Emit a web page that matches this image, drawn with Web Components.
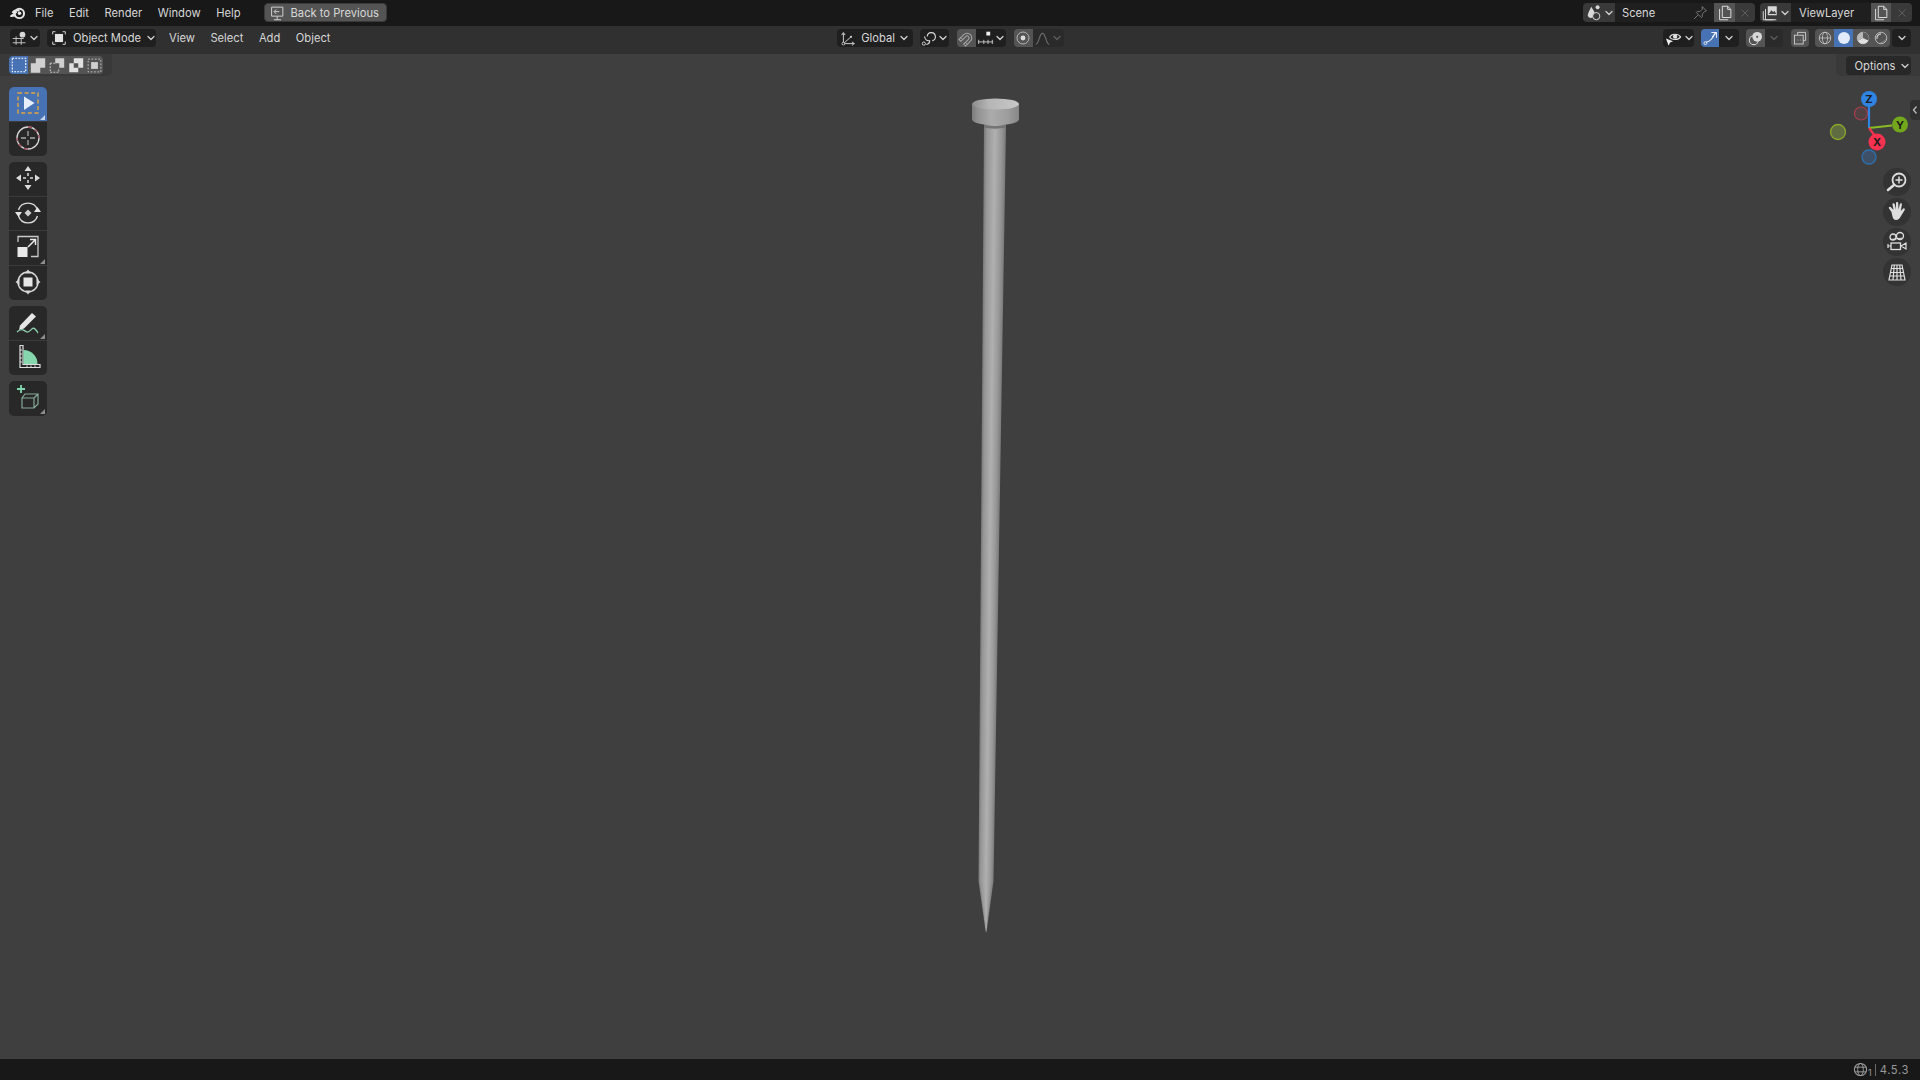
<!DOCTYPE html>
<html>
<head>
<meta charset="utf-8">
<title>Blender</title>
<style>
  html, body { margin: 0; height: 100%; background: #3f3f3f; overflow: hidden; }
  body { font: 11.2px Inter, "Liberation Sans", sans-serif; color: #d8d8d8; }
</style>
</head>
<body>
<blender-app></blender-app>
<script>
const chevron = `<path d="M-3-1.5 0 1.5 3-1.5" fill="none" stroke="currentColor" stroke-width="1.3" stroke-linecap="round" stroke-linejoin="round"/>`;

// all drawn in a 20x20 box
const icons = {
  logo: `<circle cx="11.5" cy="10.5" r="5.2" fill="none" stroke="#e6e6e6" stroke-width="2.2"/><circle cx="11.7" cy="10.3" r="2" fill="#e6e6e6"/><path d="M2 13.5 8 9.2 4 9.2 6 7.4 11 7.4 M2.5 13.5 7 13" fill="none" stroke="#e6e6e6" stroke-width="1.8" stroke-linejoin="round" stroke-linecap="round"/>`,
  back: `<path d="M4 3.5h12.5v10H4z" fill="none" stroke="#d0d0d0" stroke-width="1.1"/><path d="M6.5 17.5h8M10.2 13.5v4" stroke="#d0d0d0" stroke-width="1.1"/><path d="M12.5 8.5H7M9.2 6 6.7 8.5 9.2 11" fill="none" stroke="#d0d0d0" stroke-width="1.1"/>`,
  editor: `<circle cx="13.5" cy="5.5" r="3.4" fill="#d8d8d8"/><path d="M2 10h13M2 15h15M6 7.5v10M12 10v7.5" fill="none" stroke="#c8c8c8" stroke-width="1.1"/>`,
  objmode: `<rect x="5.5" y="5.5" width="9" height="9" fill="#e4e4e4"/><path d="M3 6V3h3M14 3h3v3M17 14v3h-3M6 17H3v-3" fill="none" stroke="#d0d0d0" stroke-width="1.1"/>`,
  selSet: `<rect x="2.5" y="2.5" width="15" height="15" fill="none" stroke="#fff" stroke-width="1.2" stroke-dasharray="2 1.4"/>`,
  selExtend: `<path d="M2 8H7.5V2.5h10.5V13H12.5V18.5H2z" fill="#d0d0d0"/>`,
  selSub: `<path d="M8 2.5h10V13H12.5V8H8z" fill="#d0d0d0"/><path d="M2.5 8H8M2.5 8v10h9.5V13.5" fill="none" stroke="#d0d0d0" stroke-width="1.1" stroke-dasharray="2 1.4"/>`,
  selInvert: `<path d="M7.5 2.5H18V13H12.5V8H7.5zM2.5 8h5v5h5v5H2.5z" fill="#e0e0e0"/>`,
  selAnd: `<rect x="2.5" y="2.5" width="15" height="15" fill="none" stroke="#c8c8c8" stroke-width="1.1" stroke-dasharray="2 2"/><rect x="6" y="6" width="8" height="8" fill="#d0d0d0"/>`,
  globalAxes: `<path d="M4 4v12h12M4 16 13 8" fill="none" stroke="#d8d8d8" stroke-width="1.1"/><path d="M2 6 4 3 6 6M14 14l3 2-3 2" fill="none" stroke="#d8d8d8" stroke-width="1.1"/><circle cx="4" cy="16" r="1.6" fill="#1f1f1f" stroke="#d8d8d8"/><circle cx="13" cy="8" r="1.2" fill="#d8d8d8"/>`,
  pivot: `<path d="M8.5 7.5A4.8 4.8 0 1 1 14.5 12.5M11.5 12.5A4.8 4.8 0 0 1 5.5 7.5" fill="none" stroke="#dcdcdc" stroke-width="1.3"/><path d="M11.5 12.5A4.8 4.8 0 0 1 7.5 17" fill="none" stroke="#dcdcdc" stroke-width="1.3"/><circle cx="4.5" cy="16" r="1.9" fill="none" stroke="#dcdcdc" stroke-width="1.1"/>`,
  magnet: `<g transform="rotate(45 10 10)"><path d="M4.5 17V9a5.5 5.5 0 0 1 11 0v8h-3.2V9a2.3 2.3 0 0 0-4.6 0v8z" fill="none" stroke="#a8a8a8" stroke-width="1.2"/><path d="M4.5 14h3.2M12.3 14h3.2" stroke="#a8a8a8"/></g>`,
  snap: `<rect x="11" y="2" width="4.5" height="4.5" fill="#f0f0f0"/><path d="M1 14h18M2 11.5v5M8 11.5v5M13 11.5v5M18 11.5v5" fill="none" stroke="#c8c8c8" stroke-width="1.1"/>`,
  prop: `<circle cx="10" cy="10" r="7.5" fill="none" stroke="#b8b8b8" stroke-width="1.2"/><circle cx="10" cy="10" r="3" fill="#dcdcdc"/>`,
  falloff: `<path d="M2 17c4 0 4-13 8-13s4 13 8 13" fill="none" stroke="#6c6c6c" stroke-width="1.3"/>`,
  sceneIco: `<path d="M7 3c2 3.5 4 5.5 4 8.5a4.2 4.2 0 0 1-8 1.5C3 9.5 6 6 7 3z" fill="#d8d8d8"/><circle cx="14" cy="3.7" r="2.2" fill="#d8d8d8"/><circle cx="12.5" cy="13.5" r="4" fill="#393939" stroke="#d8d8d8" stroke-width="1.1"/>`,
  pin: `<path d="M12 3l5 5-2 .8-3 3 .2 3-1.2 1.2-6-6L6.2 8.800l3 .2 3-3zM7 13l-4.5 4.5" fill="none" stroke="#7c7c7c" stroke-width="1.1"/>`,
  copy: `<path d="M4 5.5v12h9.5M7 2.5h6l3.5 3.5v9H7z" fill="none" stroke="#dcdcdc" stroke-width="1.1"/><path d="M13 2.5V6h3.5" fill="none" stroke="#dcdcdc" stroke-width="1.1"/>`,
  close: `<path d="M5 5l10 10M15 5 5 15" stroke="#5e5e5e" stroke-width="1.4"/>`,
  layers: `<path d="M2.5 8v9.5M5 5.5v12h12M2.5 17.5H14" fill="none" stroke="#d8d8d8" stroke-width="1.1"/><rect x="7.5" y="2.5" width="10" height="10" fill="#d8d8d8"/><path d="M8.5 11l3-4 2 2 1.5-1.5 2 3.5z" fill="#444"/>`,
  eye: `<path d="M6 8.5c2-4 9-4 11.5-.2-2.5 3.7-9.5 3.7-11.5.2z" fill="none" stroke="#e0e0e0" stroke-width="1.2"/><circle cx="11.7" cy="8" r="2.3" fill="#e0e0e0"/><path d="M2 10l7.5 2.8-3.2 1.3-1.4 3.5z" fill="#f0f0f0"/>`,
  gizmos: `<path d="M4.5 14.5C9 14 13.5 9.5 15 4" fill="none" stroke="#e8eefc" stroke-width="1.2"/><circle cx="4" cy="15.5" r="1.7" fill="none" stroke="#e8eefc" stroke-width="1.1"/><path d="M11 3h6v6M17 3l-5 5" fill="none" stroke="#e8eefc" stroke-width="1.2"/>`,
  overlay: `<circle cx="8" cy="12" r="5.2" fill="none" stroke="#d8d8d8" stroke-width="1.2"/><circle cx="12" cy="8" r="5.7" fill="#d8d8d8"/><circle cx="12" cy="8" r="1.3" fill="#545454"/>`,
  xray: `<path d="M7 6V3h10v10h-3" fill="none" stroke="#d4d4d4" stroke-width="1.1"/><rect x="3" y="6.5" width="11" height="11" fill="none" stroke="#d4d4d4" stroke-width="1.1"/><path d="M7 12.5h.8M10 12.5h.8" stroke="#d4d4d4"/>`,
  wire: `<circle cx="10" cy="10" r="7.2" fill="none" stroke="#c4c4c4" stroke-width="1.1"/><ellipse cx="10" cy="10" rx="3.3" ry="7.2" fill="none" stroke="#c4c4c4"/><path d="M2.8 10h14.4" stroke="#c4c4c4"/>`,
  solid: `<circle cx="10" cy="10" r="7.5" fill="#e3ebfb"/>`,
  material: `<circle cx="10" cy="10" r="7.2" fill="none" stroke="#c4c4c4"/><path d="M10 2.8A7.2 7.2 0 0 1 16.5 13L10 10z" fill="#5c5c5c"/><path d="M10 2.8V10l-6.4 3.3A7.2 7.2 0 0 1 10 2.8z" fill="#b8b8b8"/><path d="M3.6 13.3 10 10l6.5 3A7.2 7.2 0 0 1 3.6 13.3z" fill="#e0e0e0"/>`,
  rendered: `<circle cx="10" cy="10" r="7.2" fill="none" stroke="#c4c4c4" stroke-width="1.1"/><path d="M5 11a5.2 5.2 0 0 1 5-6.2" fill="none" stroke="#d8d8d8" stroke-width="1.4"/><path d="M15.5 12a6 6 0 0 1-6 3.7" fill="none" stroke="#8c8c8c" stroke-width="1.2"/>`,
  globe: `<circle cx="8" cy="8" r="6.5" fill="none" stroke="#a0a0a0" stroke-width="1.1"/><ellipse cx="8" cy="8" rx="3" ry="6.5" fill="none" stroke="#a0a0a0"/><path d="M2 5.5h12M2 10.5h12" stroke="#a0a0a0"/>`,
};

// tool strip icons, 28x28 box
const toolIcons = {
  select: `<path d="M4 4h20v20H4z" fill="none" stroke="#e3a63f" stroke-width="1.4" stroke-dasharray="4 2.6"/><path d="M10 7.5 20.5 14 10 21z" fill="#e9eefb"/>`,
  cursor: `<circle cx="14" cy="14" r="11" fill="none" stroke="#d8d8d8" stroke-width="1.3"/><path d="M14 3A11 11 0 0 1 25 14M14 25A11 11 0 0 1 3 14" fill="none" stroke="#a04a5c" stroke-width="1.3" stroke-dasharray="4 3"/><path d="M14 7v5M14 16v5M7 14h5M16 14h5" stroke="#a8a8a8" stroke-width="1.3"/>`,
  move: `<path d="M14 2l3.5 5h-7zM14 26l3.5-5h-7zM2 14l5-3.5v7zM26 14l-5-3.5v7z" fill="#dcdcdc"/><path d="M14 9v3M14 16v3M9 14h3M16 14h3" stroke="#dcdcdc" stroke-width="1.5"/>`,
  rotate: `<path d="M4.5 11a10 10 0 0 1 19 0M23.5 17a10 10 0 0 1-19 0" fill="none" stroke="#d8d8d8" stroke-width="1.4"/><path d="M1 13h7l-3.5 5zM20 13h7l-3.5-5z" fill="#e4e4e4"/><path d="M14 10.5l3.5 3.5-3.5 3.5-3.5-3.5z" fill="#cfcfcf"/>`,
  scale: `<path d="M4 9V3.5h20v20H17" fill="none" stroke="#c8c8c8" stroke-width="1.3"/><rect x="3.5" y="14" width="10" height="10" fill="#e8e8e8"/><path d="M14 14l7-7M16 6.5h5.5V12" fill="none" stroke="#e8e8e8" stroke-width="1.5"/>`,
  transform: `<circle cx="14" cy="14" r="10" fill="none" stroke="#d8d8d8" stroke-width="1.5"/><rect x="9" y="9" width="10" height="10" fill="#e6e6e6" stroke="#282828"/><path d="M14 1.5l3 4h-6zM14 26.5l3-4h-6zM1.5 14l4-3v6zM26.5 14l-4-3v6z" fill="#d8d8d8"/>`,
  annotate: `<path d="M6 17.5 18 5l4 3.5L10 20.5l-5 1.5z" fill="#e6e6e6"/><path d="M3 24c5-5 7-1 10 0s5-6 8-3 2 3 3 4" fill="none" stroke="#8ed1ae" stroke-width="1.3"/>`,
  measure: `<path d="M6 2.5h3v19h17v3H6z" fill="none" stroke="#dedede" stroke-width="1.2"/><path d="M9.5 7a14 14 0 0 1 14 14H9.5z" fill="#86d6ae"/><path d="M6 7h2M6 11h2M6 15h2M6 19h2M13 22.5v2M17 22.5v2M21 22.5v2" stroke="#dedede"/>`,
  addcube: `<path d="M11 12h13v10l-4 4H8V16zM8 16h12v10M20 16l4-4" fill="none" stroke="#86a899" stroke-width="1.2" transform="translate(0 -1)"/><path d="M7 2v8M3 6h8" stroke="#7fd8ad" stroke-width="1.8"/>`,
};

function ico(name, size = 20) {
  const box = toolIcons[name] ? 28 : 20;
  const body = toolIcons[name] || icons[name];
  return `<svg width="${size}" height="${size}" viewBox="0 0 ${box} ${box}">${body}</svg>`;
}
const chev = (col = "#cfcfcf") => `<svg class="chev" width="10" height="10" viewBox="-5 -5 10 10" style="color:${col}">${chevron}</svg>`;

// plain text entry of a menu bar
class MenuItem extends HTMLElement {
  constructor() {
    super();
    this.attachShadow({ mode: "open" }).innerHTML = `
      <style>:host { display: block; color: #d6d6d6; white-space: nowrap; }</style><slot></slot>`;
  }
}

// rounded pressed/dark widget: <bl-btn w="30" kind="dark|gray|blue|dim" icon="x" caret>text</bl-btn>
class BlBtn extends HTMLElement {
  constructor() {
    super();
    const kind = this.getAttribute("kind") || "dark";
    const w = this.getAttribute("w");
    const name = this.getAttribute("icon");
    const fill = { dark: "#1f1f1f", gray: "#545454", blue: "#4772b3", dim: "#2a2a2a", flat: "#393939" }[kind];
    const r = this.getAttribute("r") || "4px";
    this.attachShadow({ mode: "open" }).innerHTML = `
      <style>
        :host { display: flex; align-items: center; justify-content: center; gap: 1px; height: 100%;
                box-sizing: border-box; background: ${fill}; border-radius: ${r}; color: #d8d8d8;
                ${w ? `width: ${w}px;` : ""} white-space: nowrap; flex: none; }
        svg { display: block; flex: none; }
      </style>
      ${name ? ico(name, +(this.getAttribute("size") || 17)) : ""}<slot></slot>
      ${this.hasAttribute("caret") ? chev(this.getAttribute("caret") || "#cfcfcf") : ""}`;
  }
}

// row of joined widgets, keeps the fixed height of a header row
class BtnGroup extends HTMLElement {
  constructor() {
    super();
    this.attachShadow({ mode: "open" }).innerHTML = `
      <style>:host { display: flex; height: 100%; flex: none; }</style><slot></slot>`;
  }
}

class TopBar extends HTMLElement {
  constructor() {
    super();
    this.attachShadow({ mode: "open" }).innerHTML = `
      <style>
        :host { display: flex; align-items: center; height: 26px; background: #181818; padding: 3px 8px 4px 9px; box-sizing: border-box; }
        .menus { display: flex; gap: 15.5px; margin-left: 8px; align-items: center; }
        .back { margin-left: 23px; padding: 0 8px 0 3px; gap: 5px; justify-content: flex-start; border: 1px solid #3a3a3a; width: 123px; }
        .grow { flex: 1; }
        .name { justify-content: flex-start; padding-left: 7px; box-sizing: border-box; }
        .sp { width: 5px; flex: none; }
        svg { display: block; }
      </style>
      <svg width="18" height="18" viewBox="0 0 20 20">${icons.logo}</svg>
      <div class="menus">
        <menu-item>File</menu-item><menu-item>Edit</menu-item><menu-item>Render</menu-item>
        <menu-item>Window</menu-item><menu-item>Help</menu-item>
      </div>
      <bl-btn class="back" kind="gray" icon="back" size="18">Back to Previous</bl-btn>
      <div class="grow"></div>
      <btn-group>
        <bl-btn w="32" kind="flat" r="4px 0 0 4px" icon="sceneIco" size="18" caret></bl-btn>
        <bl-btn w="99" class="name" kind="dark" r="0" style="position:relative">Scene<pin-mark></pin-mark></bl-btn>
        <bl-btn w="21" kind="gray" r="0" icon="copy" size="18"></bl-btn>
        <bl-btn w="20" kind="flat" r="0 4px 4px 0" icon="close" size="14"></bl-btn>
      </btn-group>
      <div class="sp"></div>
      <btn-group>
        <bl-btn w="31" kind="flat" r="4px 0 0 4px" icon="layers" size="18" caret></bl-btn>
        <bl-btn w="80" class="name" kind="dark" r="0" style="padding-left:8px">ViewLayer</bl-btn>
        <bl-btn w="20" kind="gray" r="0" icon="copy" size="18"></bl-btn>
        <bl-btn w="21" kind="flat" r="0 4px 4px 0" icon="close" size="14"></bl-btn>
      </btn-group>`;
  }
}

// the little pin that lies over the scene name field
class PinMark extends HTMLElement {
  constructor() {
    super();
    this.attachShadow({ mode: "open" }).innerHTML = `
      <style>:host { position: absolute; right: 5px; top: 1px; display: block; }</style>${ico("pin", 17)}`;
  }
}

class ViewHeader extends HTMLElement {
  constructor() {
    super();
    this.attachShadow({ mode: "open" }).innerHTML = `
      <style>
        :host { display: flex; align-items: center; height: 28px; background: #303030; padding: 3px 9px 7px 10px; box-sizing: border-box; }
        .menus { display: flex; gap: 15.5px; margin: 0 0 0 13px; align-items: center; }
        .mode { padding: 0 4px 0 3px; gap: 5px; margin-left: 7px; width: 109px; box-sizing: border-box; justify-content: flex-start; }
        .l { flex: 1; }
        .g { width: 7px; flex: none; }
      </style>
      <bl-btn w="30" icon="editor" size="17" caret></bl-btn>
      <bl-btn class="mode" icon="objmode" size="18" caret>Object Mode</bl-btn>
      <div class="menus">
        <menu-item>View</menu-item><menu-item>Select</menu-item><menu-item>Add</menu-item><menu-item>Object</menu-item>
      </div>
      <div style="width:506px;flex:none"></div>
      <bl-btn w="76" icon="globalAxes" size="17" style="gap:4px;" caret>Global</bl-btn>
      <div class="g"></div>
      <bl-btn w="29" icon="pivot" size="17" caret></bl-btn>
      <div style="width:8px;flex:none"></div>
      <btn-group>
        <bl-btn w="19" kind="gray" r="4px 0 0 4px" icon="magnet" size="17"></bl-btn>
        <bl-btn w="30" r="0 4px 4px 0" icon="snap" size="17" caret></bl-btn>
      </btn-group>
      <div style="width:8px;flex:none"></div>
      <btn-group>
        <bl-btn w="19" kind="gray" r="4px 0 0 4px" icon="prop" size="16"></bl-btn>
        <bl-btn w="31" kind="dim" r="0 4px 4px 0" icon="falloff" size="17" caret="#5c5c5c"></bl-btn>
      </btn-group>
      <div class="l"></div>
      <bl-btn w="31" icon="eye" size="19" caret></bl-btn>
      <div class="g"></div>
      <btn-group>
        <bl-btn w="18" kind="blue" r="4px 0 0 4px" icon="gizmos" size="17"></bl-btn>
        <bl-btn w="20" r="0 4px 4px 0" caret></bl-btn>
      </btn-group>
      <div class="g"></div>
      <btn-group>
        <bl-btn w="19" kind="gray" r="4px 0 0 4px" icon="overlay" size="17"></bl-btn>
        <bl-btn w="18" kind="dim" r="0 4px 4px 0" caret="#5c5c5c"></bl-btn>
      </btn-group>
      <div style="width:8px;flex:none"></div>
      <bl-btn w="18" kind="gray" icon="xray" size="16"></bl-btn>
      <div style="width:6px;flex:none"></div>
      <btn-group>
        <bl-btn w="19" kind="gray" r="4px 0 0 4px" icon="wire" size="16"></bl-btn>
        <bl-btn w="19" kind="blue" r="0" icon="solid" size="16"></bl-btn>
        <bl-btn w="19" kind="gray" r="0" icon="material" size="16"></bl-btn>
        <bl-btn w="18" kind="gray" r="0 4px 4px 0" icon="rendered" size="16"></bl-btn>
      </btn-group>
      <div style="width:2px;flex:none"></div>
      <bl-btn w="19" caret></bl-btn>`;
  }
}

class ToolSettings extends HTMLElement {
  constructor() {
    super();
    this.attachShadow({ mode: "open" }).innerHTML = `
      <style>
        :host { display: flex; justify-content: space-between; height: 22px; flex: none; background: #3f3f3f; }
        .side { display: flex; background: #393939; height: 100%; box-sizing: border-box; padding: 2px 9px; }
        .left { width: 112px; border-bottom-right-radius: 5px; }
        .right { width: 84px; justify-content: flex-end; border-bottom-left-radius: 5px; padding: 2px 9px 1px; }
        .opt { gap: 4px; padding-left: 7px; box-sizing: border-box; background: #282828; }
      </style>
      <div class="side left">
        <btn-group>
          <bl-btn w="19" kind="blue" r="4px 0 0 4px" icon="selSet" size="18"></bl-btn>
          <bl-btn w="19" kind="gray" r="0" icon="selExtend" size="18"></bl-btn>
          <bl-btn w="19" kind="gray" r="0" icon="selSub" size="18"></bl-btn>
          <bl-btn w="19" kind="gray" r="0" icon="selInvert" size="18"></bl-btn>
          <bl-btn w="18" kind="gray" r="0 4px 4px 0" icon="selAnd" size="17"></bl-btn>
        </btn-group>
      </div>
      <div class="side right">
        <bl-btn class="opt" w="65" caret>Options</bl-btn>
      </div>`;
  }
}

class ToolStrip extends HTMLElement {
  constructor() {
    super();
    const tool = (name, more = "", active) => `
      <div class="tool ${active ? "on" : ""}">${ico(name, 28)}${more ? '<i class="corner"></i>' : ""}</div>`;
    this.attachShadow({ mode: "open" }).innerHTML = `
      <style>
        :host { position: absolute; left: 9px; top: 33px; display: flex; flex-direction: column; width: 38px; }
        .grp { display: flex; flex-direction: column; background: #282828; border-radius: 5px; overflow: hidden; flex: none; margin-bottom: 6px; }
        .tool { position: relative; height: 34.5px; padding-bottom: 2px; box-sizing: border-box; display: flex; align-items: center; justify-content: center; }
        .tool svg { display: block; }
        .tool + .tool { box-shadow: 0 -1px 0 #3a3a3a; }
        .on { background: #4772b3; }
        .corner { position: absolute; right: 2px; bottom: 2px; border-left: 5px solid transparent; border-bottom: 5px solid #8d8d8d; }
        .on .corner { border-bottom-color: #c6d4ea; }
      </style>
      <div class="grp">${tool("select", 1, true)}${tool("cursor")}</div>
      <div class="grp">${tool("move")}${tool("rotate")}${tool("scale", 1)}${tool("transform")}</div>
      <div class="grp">${tool("annotate", 1)}${tool("measure")}</div>
      <div class="grp">${tool("addcube", 1)}</div>`;
  }
}

// axis ball gizmo, coordinates are local to its own box (1825,85)
class NavGizmo extends HTMLElement {
  constructor() {
    super();
    this.attachShadow({ mode: "open" }).innerHTML = `
      <style>
        :host { position: absolute; right: 0; top: 31px; width: 95px; height: 90px; display: block; }
        svg { display: block; }
        text { font: bold 11px Inter, "Liberation Sans", sans-serif; text-anchor: middle; fill: #1c1c1c; }
      </style>
      <svg width="95" height="90" viewBox="1825 85 95 90">
        <circle cx="1838" cy="132" r="7.5" fill="#5f6b41" stroke="#8ba729" stroke-width="1.3"/>
        <circle cx="1861" cy="113.5" r="6.5" fill="#514143" stroke="#a5404f" stroke-width="1.2"/>
        <circle cx="1869" cy="157" r="7" fill="#3e5067" stroke="#2f6fae" stroke-width="1.3"/>
        <path d="M1869 128V103" stroke="#2f83e3" stroke-width="2.2"/>
        <path d="M1869 128 1892 125.5" stroke="#8bbb25" stroke-width="2.2"/>
        <path d="M1869 128 1875 136" stroke="#f5324f" stroke-width="2.2"/>
        <circle cx="1869" cy="99" r="8" fill="#2f83e3"/>
        <text x="1869" y="103">Z</text>
        <circle cx="1900" cy="124.5" r="8" fill="#74a81c"/>
        <text x="1900" y="128.5">Y</text>
        <circle cx="1877" cy="142" r="8.5" fill="#f5324f"/>
        <text x="1877" y="146">X</text>
      </svg>`;
  }
}

class NavButtons extends HTMLElement {
  constructor() {
    super();
    const c = "#dedede";
    const btn = (inner) => `<div class="b"><svg width="24" height="24" viewBox="0 0 24 24">${inner}</svg></div>`;
    this.attachShadow({ mode: "open" }).innerHTML = `
      <style>
        :host { position: absolute; right: 9px; top: 114px; display: flex; flex-direction: column; gap: 2px; }
        .b { width: 28px; height: 28px; border-radius: 50%; background: #333; display: flex; align-items: center; justify-content: center; }
      </style>
      ${btn(`<circle cx="14" cy="10" r="6.5" fill="none" stroke="${c}" stroke-width="1.8"/><path d="M9 15l-6 5" stroke="${c}" stroke-width="2.6" stroke-linecap="round"/><path d="M14 6.5v7M10.5 10h7" stroke="${c}" stroke-width="1.5"/>`)}
      ${btn(`<path d="M6.5 12 4 8.5c-.8-1.5 1-2.5 2-1.3L8.5 10 7.5 4.5c-.2-1.5 1.8-1.8 2.2-.4L11 9.5V3c0-1.5 2.2-1.5 2.2 0l.3 6.5 1.3-5.300c.4-1.4 2.3-1 2.1.4L15.8 11l2.2-2.300c1-1 2.5 0 1.7 1.300L16 16c-1 2-2.5 4-5 4-3 0-3.5-3-4.5-8z" fill="${c}"/>`)}
      ${btn(`<circle cx="8" cy="7" r="3" fill="none" stroke="${c}" stroke-width="1.3"/><circle cx="15" cy="6" r="3.5" fill="none" stroke="${c}" stroke-width="1.3"/><path d="M5.5 9.5 18 8" stroke="${c}"/><rect x="6" y="13" width="9.5" height="6.5" fill="none" stroke="${c}" stroke-width="1.3"/><path d="M3 14v4M3 16h3M16 16l5-3v6z" fill="none" stroke="${c}" stroke-width="1.2"/>`)}
      ${btn(`<path d="M7 5h10l3 15H4zM12 5v15M5.5 12.5h13M6.3 8.5h11.4M4.8 16h14.4M9.3 5l-1.3 15M14.7 5l1.3 15" fill="none" stroke="${c}" stroke-width="1.2"/>`)}`;
  }
}

// collapse tab of the sidebar
class SideTab extends HTMLElement {
  constructor() {
    super();
    this.attachShadow({ mode: "open" }).innerHTML = `
      <style>
        :host { position: absolute; right: 0; top: 46px; width: 10px; height: 20px; display: flex; align-items: center; justify-content: center;
                background: #303030; border-radius: 4px 0 0 4px; }
      </style>
      <svg width="8" height="10" viewBox="0 0 8 10"><path d="M5.5 1.5 2.5 5l3 3.5" fill="none" stroke="#bdbdbd" stroke-width="1.3"/></svg>`;
  }
}

// the nail model, free on the 3D canvas. The shank is stacked from thin rows so
// that its shading keeps following the taper
class NailModel extends HTMLElement {
  constructor() {
    super();
    this.attachShadow({ mode: "open" }).innerHTML = `
      <style>
        :host { position: absolute; left: 960px; top: 40px; display: block; }
        svg { display: block; }
      </style>
      <svg width="70" height="850" viewBox="960 94 70 850">
        <defs>
          <linearGradient id="shade" x1="0" x2="1" y1="0" y2="0">
            <stop offset="0" stop-color="#787878"/><stop offset=".14" stop-color="#969696"/>
            <stop offset=".5" stop-color="#b0b0b0"/><stop offset=".8" stop-color="#979797"/>
            <stop offset="1" stop-color="#7a7a7a"/>
          </linearGradient>
          <linearGradient id="head" x1="0" x2="1" y1="0" y2="0">
            <stop offset="0" stop-color="#7c7c7c"/><stop offset=".12" stop-color="#929292"/>
            <stop offset=".4" stop-color="#ababab"/><stop offset=".75" stop-color="#9e9e9e"/>
            <stop offset="1" stop-color="#878787"/>
          </linearGradient>
          <linearGradient id="cap" x1="0" x2="1" y1="0" y2="0">
            <stop offset="0" stop-color="#8c8c8c"/><stop offset=".35" stop-color="#b5b5b5"/>
            <stop offset="1" stop-color="#c8c8c8"/>
          </linearGradient>
        </defs>
        <g id="shank"></g>
        <path d="M972 104.5V119c0 4 10 6 23.5 6s23.5-2 23.5-6V104.5z" fill="url(#head)"/>
        <ellipse cx="995.5" cy="104" rx="23.5" ry="5.5" fill="url(#cap)"/>
        <path d="M984 124.5c6 2 16 2 22 0l0 3c-6 1.5-16 1.5-22 0z" fill="#747474"/>
      </svg>`;
  }

  connectedCallback() {
    const g = this.shadowRoot.querySelector("#shank");
    const lerp = (a, b, t) => a + (b - a) * t;
    let out = "";
    for (let y = 124; y < 932; y += 2) {
      let x1, x2;
      if (y < 880) {
        const t = (y - 125) / 755;
        x1 = lerp(984, 978.5, t);
        x2 = lerp(1006, 993.5, t);
      } else {
        const t = (y - 880) / 52;
        x1 = lerp(978.5, 985.8, t);
        x2 = lerp(993.5, 986.4, t);
      }
      out += `<rect x="${x1.toFixed(2)}" y="${y}" width="${(x2 - x1).toFixed(2)}" height="2" fill="url(#shade)"/>`;
    }
    g.innerHTML = out;
  }
}

class StatusBar extends HTMLElement {
  constructor() {
    super();
    this.attachShadow({ mode: "open" }).innerHTML = `
      <style>
        :host { display: flex; align-items: center; justify-content: flex-end; height: 21px; flex: none; background: #181818; color: #9a9a9a; padding: 0 11px 0 0; box-sizing: border-box; }
        svg { display: block; }
        sub { font-size: 9px; line-height: 1; margin: 6px 3px 0 0; align-self: center; }
        .sep { width: 1px; height: 12px; background: #6a6a6a; margin-right: 4px; }
        span { letter-spacing: .6px; }
      </style>
      <svg width="15" height="15" viewBox="0 0 16 16">${icons.globe}</svg><sub>1</sub><div class="sep"></div><span>4.5.3</span>`;
  }
}

class BlenderViewport extends HTMLElement {
  constructor() {
    super();
    this.attachShadow({ mode: "open" }).innerHTML = `
      <style>
        :host { display: flex; flex-direction: column; flex: 1; position: relative; background: #3f3f3f; min-height: 0; }
      </style>
      <tool-settings></tool-settings>
      <nail-model></nail-model>
      <tool-strip></tool-strip>
      <nav-gizmo></nav-gizmo>
      <side-tab></side-tab>
      <nav-buttons></nav-buttons>`;
  }
}

class BlenderApp extends HTMLElement {
  constructor() {
    super();
    this.attachShadow({ mode: "open" }).innerHTML = `
      <style>
        :host { display: flex; flex-direction: column; height: 100vh; width: 100vw; }
      </style>
      <top-bar></top-bar>
      <view-header></view-header>
      <blender-viewport></blender-viewport>
      <status-bar></status-bar>`;
  }
}

customElements.define("menu-item", MenuItem);
customElements.define("bl-btn", BlBtn);
customElements.define("btn-group", BtnGroup);
customElements.define("pin-mark", PinMark);
customElements.define("top-bar", TopBar);
customElements.define("view-header", ViewHeader);
customElements.define("tool-settings", ToolSettings);
customElements.define("tool-strip", ToolStrip);
customElements.define("nav-gizmo", NavGizmo);
customElements.define("nav-buttons", NavButtons);
customElements.define("side-tab", SideTab);
customElements.define("nail-model", NailModel);
customElements.define("status-bar", StatusBar);
customElements.define("blender-viewport", BlenderViewport);
customElements.define("blender-app", BlenderApp);
</script>
</body>
</html>
